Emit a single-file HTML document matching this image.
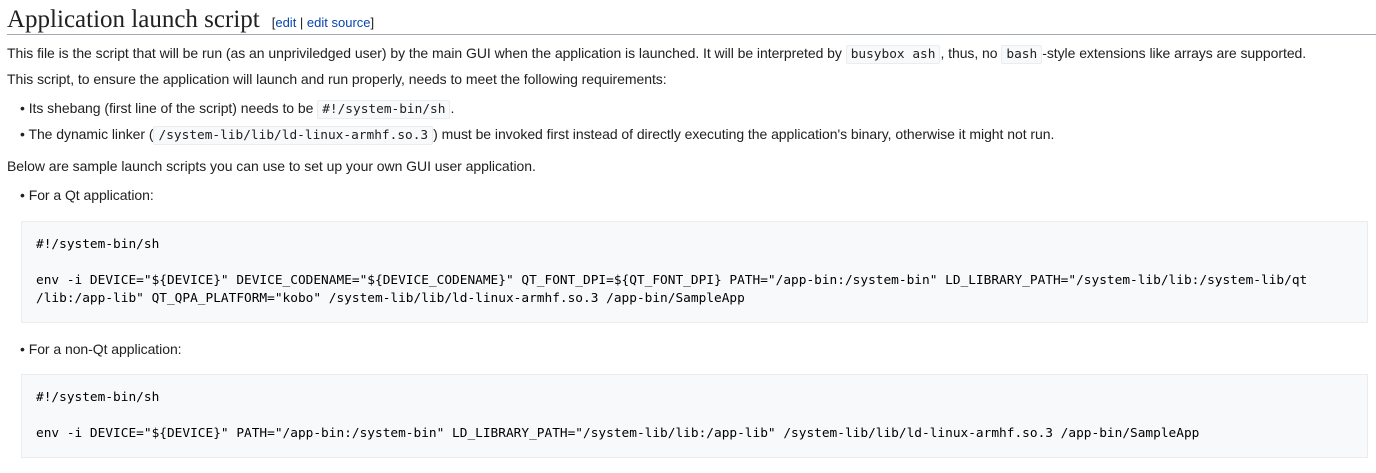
<!DOCTYPE html>
<html><head><meta charset="utf-8"><style>
body{margin:0;background:#fff;color:#202122;font-family:"Liberation Sans",sans-serif;font-size:14px;width:1376px;height:473px;overflow:hidden}
h2{font-family:"Liberation Serif",serif;font-weight:normal;font-size:25px;margin:0;position:absolute;left:7px;top:5px;width:1369px;border-bottom:1px solid #a2a9b1;height:29px;line-height:29px}
h2 .e{font-family:"Liberation Sans",sans-serif;font-size:13px;margin-left:12px;color:#202122}
a{color:#0645ad;text-decoration:none}
.t{position:absolute;left:7px;white-space:nowrap;letter-spacing:-0.05px}
code{font-family:"DejaVu Sans Mono",monospace;font-size:12.8px;background:#f8f9fa;border:1px solid #eaecf0;border-radius:2px;padding:1px 4px;letter-spacing:0}
pre{position:absolute;left:21px;width:1317px;margin:0;background:#f8f9fa;border:1px solid #eaecf0;padding:14px 14px;font-family:"DejaVu Sans Mono",monospace;font-size:12.8px;line-height:18px;color:#000;white-space:pre}
</style></head><body>
<h2>Application launch script<span class="e">[<a>edit</a> | <a>edit source</a>]</span></h2>
<div class="t" style="top:45px">This file is the script that will be run (as an unpriviledged user) by the main GUI when the application is launched. It will be interpreted by <code>busybox ash</code>, thus, no <code>bash</code>-style extensions like arrays are supported.</div>
<div class="t" style="top:71px">This script, to ensure the application will launch and run properly, needs to meet the following requirements:</div>
<div class="t" style="top:100px;left:20px">• Its shebang (first line of the script) needs to be <code>#!/system-bin/sh</code>.</div>
<div class="t" style="top:126px;left:20px">• The dynamic linker (<code>/system-lib/lib/ld-linux-armhf.so.3</code>) must be invoked first instead of directly executing the application's binary, otherwise it might not run.</div>
<div class="t" style="top:158px">Below are sample launch scripts you can use to set up your own GUI user application.</div>
<div class="t" style="top:187px;left:20px">• For a Qt application:</div>
<pre style="top:221px">#!/system-bin/sh

env -i DEVICE="${DEVICE}" DEVICE_CODENAME="${DEVICE_CODENAME}" QT_FONT_DPI=${QT_FONT_DPI} PATH="/app-bin:/system-bin" LD_LIBRARY_PATH="/system-lib/lib:/system-lib/qt
/lib:/app-lib" QT_QPA_PLATFORM="kobo" /system-lib/lib/ld-linux-armhf.so.3 /app-bin/SampleApp</pre>
<div class="t" style="top:341px;left:20px">• For a non-Qt application:</div>
<pre style="top:374px">#!/system-bin/sh

env -i DEVICE="${DEVICE}" PATH="/app-bin:/system-bin" LD_LIBRARY_PATH="/system-lib/lib:/app-lib" /system-lib/lib/ld-linux-armhf.so.3 /app-bin/SampleApp</pre>
</body></html>
